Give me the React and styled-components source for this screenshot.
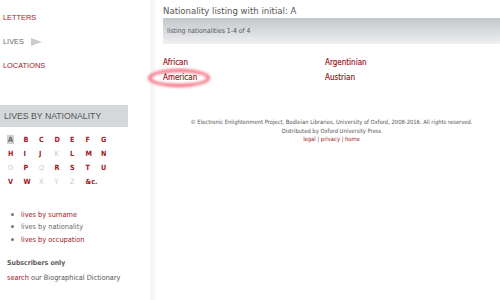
import React from "react";
import styled, { createGlobalStyle } from "styled-components";

const GlobalStyle = createGlobalStyle`
  body {
    margin: 0;
    background: #ffffff;
    font-family: "DejaVu Sans Condensed", "DejaVu Sans", sans-serif;
  }
`;

const Page = styled.div`
  width: 500px;
  height: 300px;
  display: flex;
  overflow: hidden;
  background: #ffffff;
`;

const Sidebar = styled.div`
  width: 150px;
  flex-shrink: 0;
  border-right: 5px solid #f6f6f6;
  padding-top: 6px;
  box-sizing: content-box;
`;

const NavItem = styled.div`
  height: 24px;
  line-height: 24px;
  padding-left: 3px;
  font-family: "Liberation Sans", Arial, sans-serif;
  font-size: 7.4px;
  color: ${(p) => (p.$active ? "#666666" : "#a3161c")};
  display: flex;
  align-items: center;
  gap: 7px;
`;

const Arrow = styled.span`
  width: 0;
  height: 0;
  border-top: 4px solid transparent;
  border-bottom: 4px solid transparent;
  border-left: 11px solid #cccccc;
`;

const BoxHeader = styled.div`
  margin-top: 27px;
  width: 124px;
  height: 22px;
  line-height: 22px;
  padding-left: 4px;
  background: #d4d8db;
  font-family: "Liberation Sans", Arial, sans-serif;
  font-size: 8.7px;
  color: #555555;
`;

const LetterGrid = styled.div`
  display: grid;
  grid-template-columns: repeat(7, 15.5px);
  grid-auto-rows: 13.8px;
  align-items: center;
  padding-left: 8px;
  margin-top: 6px;
`;

const Letter = styled.span`
  justify-self: start;
  font-size: 7.2px;
  line-height: 9px;
  padding: 0 1px;
  margin-left: -1px;
  color: ${(p) =>
    p.$state === "off" ? "#c8c8c8" : p.$state === "on" ? "#666666" : "#a3161c"};
  font-weight: ${(p) => (p.$state === "off" ? "normal" : "bold")};
  background: ${(p) => (p.$state === "on" ? "#cfcfcf" : "transparent")};
`;

const LinkList = styled.ul`
  list-style: none;
  margin: 20px 0 0 0;
  padding: 0;
`;

const LinkItem = styled.li`
  height: 12.5px;
  display: flex;
  align-items: center;
  font-size: 7.3px;
  color: ${(p) => (p.$current ? "#666666" : "#a3161c")};
`;

const Dot = styled.span`
  width: 3px;
  height: 3px;
  border-radius: 50%;
  background: #777777;
  margin: 0 7px 0 11px;
`;

const SubTitle = styled.div`
  margin-top: 11px;
  padding-left: 7px;
  font-size: 6.9px;
  font-weight: bold;
  color: #5a5a5a;
  line-height: 12px;
`;

const SearchLine = styled.div`
  margin-top: 4px;
  padding-left: 7px;
  font-size: 7.3px;
  color: #555555;
  line-height: 10px;
`;

const Red = styled.span`
  color: #a3161c;
`;

const Main = styled.div`
  flex: 1;
  padding-left: 8px;
  display: flex;
  flex-direction: column;
`;

const Title = styled.div`
  height: 18px;
  line-height: 21px;
  font-size: 9.5px;
  color: #555555;
`;

const InfoBar = styled.div`
  height: 26px;
  line-height: 26px;
  padding-left: 4px;
  font-size: 6.8px;
  color: #555555;
  background: linear-gradient(to bottom, #c4c7cc 0%, #dadcdf 55%, #eff0f2 100%);
`;

const NationList = styled.div`
  display: grid;
  grid-template-columns: 162px 1fr;
  grid-auto-rows: 15px;
  align-items: center;
  margin-top: 11px;
`;

const Nation = styled.span`
  position: relative;
  justify-self: start;
  font-size: 8px;
  color: #9b1218;
  -webkit-text-stroke: 0.15px #9b1218;
`;

const Circle = styled.span`
  position: absolute;
  left: -15px;
  top: 50%;
  width: 56px;
  height: 12px;
  margin-top: -9px;
  border: 3px solid rgba(238, 66, 88, 0.85);
  border-radius: 50%;
  filter: blur(1.4px);
  pointer-events: none;
`;

const Footer = styled.div`
  margin-top: 33px;
  text-align: center;
  font-size: 5.8px;
  line-height: 8.7px;
  color: #555555;
`;

const FootLinks = styled.div`
  color: #555555;
`;

const rows = [
  [["A", "on"], ["B"], ["C"], ["D"], ["E"], ["F"], ["G"]],
  [["H"], ["I"], ["J"], ["K", "off"], ["L"], ["M"], ["N"]],
  [["O", "off"], ["P"], ["Q", "off"], ["R"], ["S"], ["T"], ["U"]],
  [["V"], ["W"], ["X", "off"], ["Y", "off"], ["Z", "off"], ["&c."]],
];

export default function App() {
  return (
    <Page>
      <GlobalStyle />
      <Sidebar>
        <NavItem>LETTERS</NavItem>
        <NavItem $active>
          LIVES <Arrow />
        </NavItem>
        <NavItem>LOCATIONS</NavItem>
        <BoxHeader>LIVES BY NATIONALITY</BoxHeader>
        <LetterGrid>
          {rows.flat().map(([l, s]) => (
            <Letter key={l} $state={s}>
              {l}
            </Letter>
          ))}
        </LetterGrid>
        <LinkList>
          <LinkItem>
            <Dot />
            lives by surname
          </LinkItem>
          <LinkItem $current>
            <Dot />
            lives by nationality
          </LinkItem>
          <LinkItem>
            <Dot />
            lives by occupation
          </LinkItem>
        </LinkList>
        <SubTitle>Subscribers only</SubTitle>
        <SearchLine>
          <Red>search</Red> our Biographical Dictionary
        </SearchLine>
      </Sidebar>
      <Main>
        <Title>Nationality listing with initial: A</Title>
        <InfoBar>listing nationalities 1-4 of 4</InfoBar>
        <NationList>
          <Nation>African</Nation>
          <Nation>Argentinian</Nation>
          <Nation>
            American
            <Circle />
          </Nation>
          <Nation>Austrian</Nation>
        </NationList>
        <Footer>
          © Electronic Enlightenment Project, Bodleian Libraries, University of
          Oxford, 2008-2016. All rights reserved.
          <br />
          Distributed by Oxford University Press
          <FootLinks>
            <Red>legal</Red> | <Red>privacy</Red> | <Red>home</Red>
          </FootLinks>
        </Footer>
      </Main>
    </Page>
  );
}
